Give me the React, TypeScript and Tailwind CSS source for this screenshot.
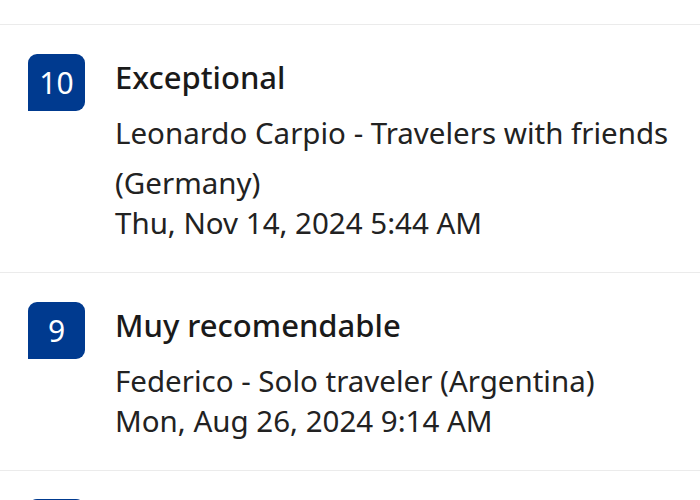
import React from 'react';

interface Review {
  score: number;
  title: string;
  author: string;
  date: string;
}

const reviews: Review[] = [
  {
    score: 10,
    title: 'Exceptional',
    author: 'Leonardo Carpio - Travelers with friends (Germany)',
    date: 'Thu, Nov 14, 2024 5:44 AM',
  },
  {
    score: 9,
    title: 'Muy recomendable',
    author: 'Federico - Solo traveler (Argentina)',
    date: 'Mon, Aug 26, 2024 9:14 AM',
  },
];

const ReviewRow = ({ review }: { review: Review }) => (
  <div className="flex border-t border-[#ebebeb] pl-[28px] pr-[20px] pt-[29px] pb-[33px]">
    <div className="w-[57px] h-[57px] shrink-0 bg-[#003a8f] rounded-[9px] rounded-bl-none flex items-center justify-center text-white text-[30px] leading-none">
      {review.score}
    </div>
    <div className="ml-[30px] flex flex-col">
      <div className="text-[31px] leading-[46px] font-medium text-[#1a1a1a]">{review.title}</div>
      <div className="mt-[8px] text-[29.5px] leading-[50px] text-[#222]">{review.author}</div>
      <div className="-mt-[1px] text-[29.5px] leading-[32px] text-[#222]">{review.date}</div>
    </div>
  </div>
);

export default function App() {
  return (
    <div
      className="w-[700px] h-[500px] overflow-hidden bg-white pt-[24px]"
      style={{ fontFamily: '"Noto Sans", "Open Sans", sans-serif' }}
    >
      {reviews.map((r, i) => (
        <ReviewRow key={i} review={r} />
      ))}
      <div className="flex border-t border-[#ebebeb] pl-[28px] pt-[28px]">
        <div className="w-[57px] h-[57px] shrink-0 bg-[#003a8f] rounded-[9px] rounded-bl-none" />
      </div>
    </div>
  );
}
